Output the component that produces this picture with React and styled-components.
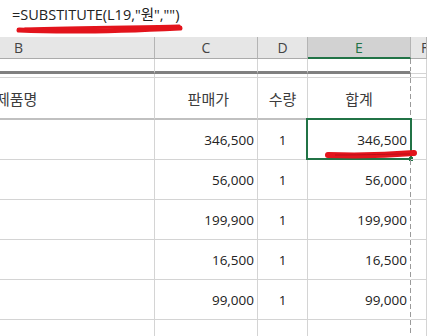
import React from 'react'
import styled, { createGlobalStyle } from 'styled-components'

const Global = createGlobalStyle`
    html, body {
        margin: 0;
        padding: 0;
        background: #fff;
        overflow: hidden;
    }
    body {
        font-family: "Open Sans", "Noto Sans CJK KR", sans-serif;
    }
`

const GRID = '#d4d4d4'
const GREEN = '#217346'

const Page = styled.div`
    position: relative;
    width: 427px;
    height: 336px;
    overflow: hidden;
`
const FormulaBar = styled.div`
    height: 37px;
    box-sizing: border-box;
    padding-left: 12px;
    line-height: 29px;
    font-size: 14.5px;
    color: #222;
    white-space: nowrap;
`
const Sheet = styled.div`
    display: grid;
    grid-template-columns: 155px 103px 50px 103px 1fr;
    grid-template-rows: 22px 15px 4px 42px repeat(5, 40px) 20px;
`
const ColHead = styled.div`
    box-sizing: border-box;
    background: ${({ active }) => (active ? '#d2d2d2' : '#e6e6e6')};
    color: ${({ active }) => (active ? GREEN : '#444')};
    border-right: 1px solid #b4b4b4;
    border-bottom: ${({ active }) => (active ? `2px solid ${GREEN}` : '1px solid #ababab')};
    font-size: 14px;
    line-height: 21px;
    text-align: ${({ align }) => align || 'center'};
    padding-left: ${({ pad }) => pad || 0}px;
    overflow: hidden;
`
const Cell = styled.div`
    position: relative;
    box-sizing: border-box;
    border-right: 1px solid ${GRID};
    border-bottom: ${({ bottom }) => bottom || `1px solid ${GRID}`};
    display: flex;
    align-items: center;
    justify-content: ${({ align }) => align || 'flex-end'};
    padding-right: ${({ align }) => (align ? 0 : 3)}px;
    font-size: 13.5px;
    color: #222;
    white-space: nowrap;
    ${({ dashed }) => dashed && `
        border-right: 1px solid transparent;
        background: linear-gradient(to bottom, #9a9a9a 5px, transparent 5px) right top / 1px 8px repeat-y;
        background-origin: border-box;
        background-clip: border-box;
    `}
`
const HeadCell = styled(Cell)`
    font-family: "Noto Sans CJK KR", sans-serif;
    font-size: 15px;
    color: #3c3c3c;
    padding-top: 1px;
`
const NameText = styled.span`
    margin-left: -4px;
`
const Selection = styled.div`
    position: absolute;
    top: -2px;
    left: -2px;
    right: -2px;
    bottom: -1px;
    border: 2px solid ${GREEN};
    pointer-events: none;
    &::after {
        content: '';
        position: absolute;
        right: -3px;
        bottom: -3px;
        width: 4px;
        height: 4px;
        background: ${GREEN};
    }
`
const Scribble = styled.svg`
    position: absolute;
    left: 0;
    top: 0;
    pointer-events: none;
`

const rows = [
    ['346,500', '1', '346,500'],
    ['56,000', '1', '56,000'],
    ['199,900', '1', '199,900'],
    ['16,500', '1', '16,500'],
    ['99,000', '1', '99,000'],
]

const THICK = '3px solid #808080'
const HEADLINE = '2px solid #c0c0c0'

export default function App() {
    return (
        <Page>
            <Global />
            <FormulaBar>=SUBSTITUTE(L19,"원","")</FormulaBar>
            <Sheet>
                <ColHead align="left" pad={14}>B</ColHead>
                <ColHead>C</ColHead>
                <ColHead>D</ColHead>
                <ColHead active>E</ColHead>
                <ColHead align="left" pad={10}>F</ColHead>

                <Cell bottom={THICK} />
                <Cell bottom={THICK} />
                <Cell bottom={THICK} />
                <Cell bottom={THICK} dashed />
                <Cell />

                <Cell />
                <Cell />
                <Cell />
                <Cell dashed />
                <Cell />

                <HeadCell bottom={HEADLINE} align="flex-start"><NameText>제품명</NameText></HeadCell>
                <HeadCell bottom={HEADLINE} style={{ paddingRight: 28 }}>판매가</HeadCell>
                <HeadCell bottom={HEADLINE} align="center">수량</HeadCell>
                <HeadCell bottom={HEADLINE} align="center" dashed>합계</HeadCell>
                <Cell />

                {rows.map(([price, qty, total], i) => (
                    <React.Fragment key={i}>
                        <Cell />
                        <Cell>{price}</Cell>
                        <Cell align="center">{qty}</Cell>
                        <Cell dashed>
                            {total}
                            {i === 0 && <Selection />}
                        </Cell>
                        <Cell />
                    </React.Fragment>
                ))}

                <Cell />
                <Cell />
                <Cell />
                <Cell dashed />
                <Cell />
            </Sheet>
            <Scribble width="427" height="336">
                <path d="M19 30 C60 32, 120 31, 180 28" stroke="#e3141c" strokeWidth="5" strokeLinecap="round" fill="none" />
                <path d="M25 29 C80 27, 140 27, 179 26" stroke="#e3141c" strokeWidth="3" strokeLinecap="round" fill="none" />
                <path d="M328 155 C360 156, 390 155, 414 153" stroke="#e3141c" strokeWidth="6" strokeLinecap="round" fill="none" />
                <path d="M335 155 C365 155, 390 154, 410 154" stroke="#b80f18" strokeWidth="1" fill="none" />
            </Scribble>
        </Page>
    )
}
